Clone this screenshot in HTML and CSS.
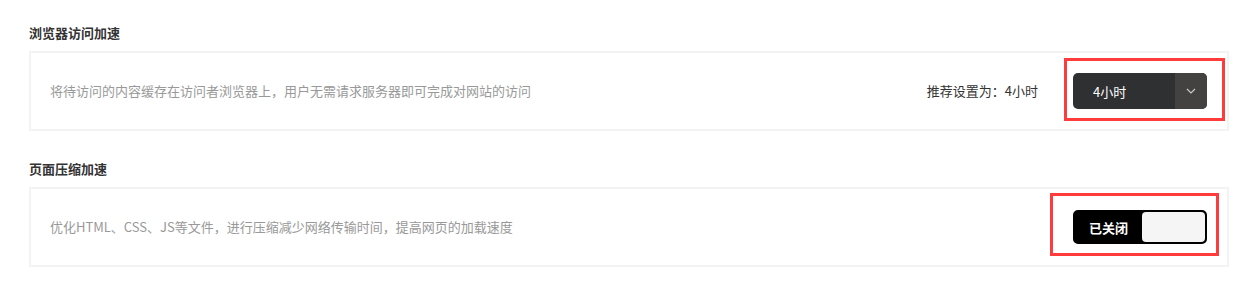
FILE: index.html
```html
<!DOCTYPE html>
<html lang="zh-CN">
<head>
<meta charset="utf-8">
<title>加速设置</title>
<link rel="stylesheet" href="styles.css">
</head>
<body>
<div class="page">
  <section class="section">
    <h3 class="title">浏览器访问加速</h3>
    <div class="card">
      <p class="desc">将待访问的内容缓存在访问者浏览器上，用户无需请求服务器即可完成对网站的访问</p>
      <span class="hint">推荐设置为：4小时</span>
      <div class="select mark mark-select">
        <span class="select-value">4小时</span>
        <span class="select-arrow">
          <svg width="10" height="6" viewBox="0 0 10 6"><path d="M1 1 L5 5 L9 1" fill="none" stroke="#c8c8c8" stroke-width="1.2"/></svg>
        </span>
      </div>
    </div>
  </section>
  <section class="section section-second">
    <h3 class="title">页面压缩加速</h3>
    <div class="card">
      <p class="desc">优化HTML、CSS、JS等文件，进行压缩减少网络传输时间，提高网页的加载速度</p>
      <div class="toggle mark mark-toggle">
        <span class="toggle-label">已关闭</span>
        <span class="toggle-knob"></span>
      </div>
    </div>
  </section>
</div>
</body>
</html>
```
FILE: styles.css
```css
* { box-sizing: border-box; }
html, body { margin: 0; padding: 0; background: #fff; }
body {
  font-family: "Noto Sans CJK SC", "Liberation Sans", sans-serif;
  font-size: 13px;
  color: #333;
}
.page {
  width: 1200px;
  margin-left: 29px;
  padding-top: 23px;
}
.section-second { margin-top: 28px; }
.title {
  margin: 0 0 8px 0;
  font-size: 13px;
  line-height: 20px;
  font-weight: bold;
  color: #333;
}
.card {
  height: 80px;
  border: 2px solid #f3f3f3;
  display: flex;
  align-items: center;
  padding: 0 20px 0 19px;
}
.desc {
  margin: 0;
  flex: 1;
  color: #999;
  line-height: 20px;
}
.hint {
  color: #333;
  margin-right: 35px;
  line-height: 20px;
}
.select {
  width: 134px;
  height: 36px;
  background: #2f3032;
  border-radius: 5px;
  display: flex;
  align-items: stretch;
  color: #fff;
}
.select-value {
  flex: 1;
  padding-left: 20px;
  display: flex;
  align-items: center;
  font-size: 13px;
}
.select-arrow {
  width: 32px;
  background: #444240;
  border-radius: 0 5px 5px 0;
  display: flex;
  align-items: center;
  justify-content: center;
}
.toggle {
  width: 134px;
  height: 34px;
  background: #000;
  border: 2px solid #000;
  border-radius: 5px;
  display: flex;
  align-items: stretch;
}
.toggle-label {
  width: 67px;
  display: flex;
  align-items: center;
  justify-content: center;
  color: #fff;
  font-weight: bold;
}
.toggle-knob {
  flex: 1;
  background: #f5f5f5;
  border-radius: 4px;
}
.mark { position: relative; }
.mark::after {
  content: "";
  position: absolute;
  border: 3px solid #ff3b3b;
  pointer-events: none;
}
.mark-select::after { left: -9px; right: -18px; top: -15px; bottom: -12px; }
.mark-toggle::after { left: -25px; right: -14px; top: -19px; bottom: -14px; }
```
